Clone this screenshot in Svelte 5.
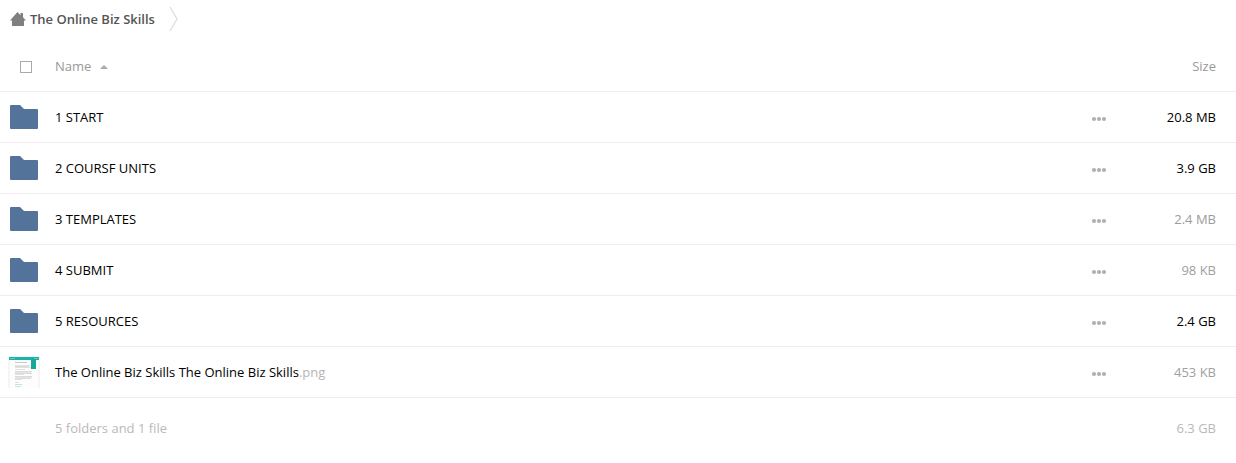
<script>
  let allSelected = false;
  let ascending = true;

  const files = [
    { name: '1 START', size: '20.8 MB', color: '#000000', type: 'dir' },
    { name: '2 COURSF UNITS', size: '3.9 GB', color: '#000000', type: 'dir' },
    { name: '3 TEMPLATES', size: '2.4 MB', color: '#9b9b9b', type: 'dir' },
    { name: '4 SUBMIT', size: '98 KB', color: '#a0a0a0', type: 'dir' },
    { name: '5 RESOURCES', size: '2.4 GB', color: '#000000', type: 'dir' },
    { name: 'The Online Biz Skills The Online Biz Skills', ext: '.png', size: '453 KB', color: '#a0a0a0', type: 'file' }
  ];

  $: rows = ascending ? files : [...files].reverse();
</script>

<nav class="breadcrumb" aria-label="Breadcrumb">
  <a href="#home">
    <svg class="home" width="16" height="16" viewBox="0 0 16 16" aria-hidden="true">
      <path d="M7.5 1 L0 9.6 H2 V15 H14 V9.6 H16 L13 6.2 V2 H10.5 V4.2 Z" fill="#808080" />
    </svg>
    <span>The Online Biz Skills</span>
  </a>
  <svg class="crumb-arrow" width="9" height="26" viewBox="0 0 9 26" aria-hidden="true">
    <path d="M1 1 L8 13 L1 25" fill="none" stroke="#dddddd" stroke-width="1.3" />
  </svg>
</nav>

<table>
  <thead>
    <tr>
      <th class="select">
        <input type="checkbox" aria-label="Select all" bind:checked={allSelected} />
      </th>
      <th class="name">
        <button class="sort" on:click={() => (ascending = !ascending)}>
          Name
          <svg width="8" height="6" viewBox="0 0 8 6" aria-hidden="true">
            <path d={ascending ? 'M0 6 L4 2 L8 6 Z' : 'M0 2 L4 6 L8 2 Z'} fill="#aaaaaa" />
          </svg>
        </button>
      </th>
      <th class="actions"></th>
      <th class="size"><button>Size</button></th>
    </tr>
  </thead>
  <tbody>
    {#each rows as file}
      <tr>
        <td class="icon">
          {#if file.type === 'dir'}
            <svg width="32" height="32" viewBox="0 0 32 32" aria-hidden="true">
              <path d="M3 4 H12 L16 8 H29 Q30 8 30 9 V27 Q30 28 29 28 H3 Q2 28 2 27 V5 Q2 4 3 4 Z" fill="#54739a" />
            </svg>
          {:else}
            <svg width="32" height="32" viewBox="0 0 32 32" aria-hidden="true">
              <rect width="32" height="32" fill="#f5f5f5" />
              <rect x="2" y="3" width="28" height="29" fill="#fdfdfd" />
              <rect x="1" y="1" width="30" height="3" fill="#1ab3a5" />
              <path d="M2 2.5 H7 M26 2.5 H30" stroke="#5cc8bd" />
              <rect x="23" y="3" width="5" height="10" fill="#12a99b" />
              <path d="M7 6.5 H19" stroke="#c8c8c8" />
              <path d="M7 9.5 H22 M7 11.5 H23 M7 13.5 H17 M7 18.5 H16 M7 23.5 H14" stroke="#e2e2e2" />
              <path d="M7 10.5 H21 M7 15.5 H24 M7 17.5 H24 M7 20.5 H24 M7 22.5 H23" stroke="#dadada" />
              <path d="M7 16.5 H23 M7 21.5 H24" stroke="#e6e6e6" />
              <path d="M7 26.5 H11 M7 30.5 H13" stroke="#dedede" />
              <path d="M7 28.5 H14" stroke="#bce5df" />
            </svg>
          {/if}
        </td>
        <td class="name">
          <a href="#file">{file.name}{#if file.ext}<span class="ext">{file.ext}</span>{/if}</a>
        </td>
        <td class="actions">
          <button aria-label="Actions for {file.name}">
            <svg width="16" height="16" viewBox="0 0 16 16" aria-hidden="true">
              <g fill="#b0b0b0">
                <circle cx="3" cy="10" r="2.1" />
                <circle cx="8" cy="10" r="2.1" />
                <circle cx="13" cy="10" r="2.1" />
              </g>
            </svg>
          </button>
        </td>
        <td class="size" style="color: {file.color}">{file.size}</td>
      </tr>
    {/each}
  </tbody>
  <tfoot>
    <tr>
      <td></td>
      <td class="name">5 folders and 1 file</td>
      <td></td>
      <td class="size">6.3 GB</td>
    </tr>
  </tfoot>
</table>

<style>
  :global(body) {
    margin: 0;
    background: #fff;
    color: #000;
    font-family: 'Open Sans', sans-serif;
    font-size: 13px;
    line-height: 20px;
  }

  a {
    color: inherit;
    text-decoration: none;
  }

  button {
    padding: 0;
    border: 0;
    background: none;
    color: inherit;
    font: inherit;
    cursor: pointer;
  }

  svg {
    display: block;
  }

  .breadcrumb {
    display: flex;
    align-items: center;
    gap: 14px;
    height: 38px;
    padding: 0 10px;
    margin-bottom: 3px;
  }

  .breadcrumb a {
    display: flex;
    align-items: center;
    gap: 4px;
    color: #555;
    font-weight: 600;
  }

  table {
    width: 100%;
    border-spacing: 0;
    table-layout: fixed;
  }

  th,
  td {
    height: 50px;
    padding: 0;
    border-bottom: 1px solid #eee;
    text-align: left;
    font-weight: normal;
    vertical-align: middle;
  }

  th {
    color: #999;
  }

  .select {
    width: 55px;
  }

  .select input {
    display: block;
    appearance: none;
    width: 12px;
    height: 12px;
    margin: 2px 0 0 20px;
    border: 1px solid #aaa;
    background: #fff;
  }

  .select input:checked {
    background: #aaa;
  }

  .sort {
    display: flex;
    align-items: center;
    gap: 9px;
  }

  .icon svg {
    margin-left: 8px;
  }

  .ext {
    color: #b5b5b5;
  }

  .actions {
    width: 32px;
  }

  .actions button {
    display: block;
  }

  .size {
    width: 93px;
    padding-right: 20px;
    text-align: right;
  }

  tfoot td {
    height: 60px;
    border-bottom: 0;
    color: #b9b9b9;
  }
</style>
